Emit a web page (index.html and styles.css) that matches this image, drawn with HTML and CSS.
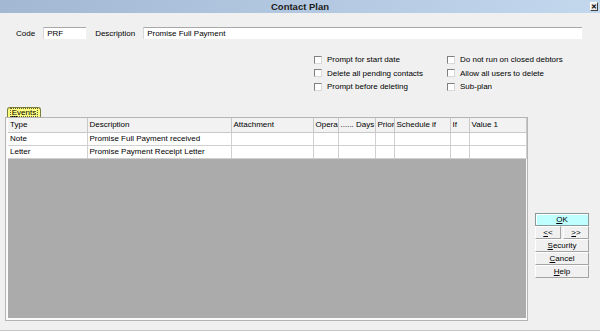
FILE: index.html
```html
<!DOCTYPE html>
<html lang="en">
<head>
  <meta charset="UTF-8">
  <title>Contact Plan</title>
  <link rel="stylesheet" href="styles.css">
</head>
<body>
  <div class="window">
    <div class="titlebar">
      <span></span>
      <span class="title">Contact Plan</span>
      <span class="close-wrap"><span class="close">&#x2715;</span></span>
    </div>

    <div class="fields">
      <label class="field-label">Code</label>
      <div class="input code-input">PRF</div>
      <label class="field-label desc-label">Description</label>
      <div class="input desc-input">Promise Full Payment</div>
    </div>

    <div class="options">
      <div class="option"><span class="check"></span>Prompt for start date</div>
      <div class="option"><span class="check"></span>Do not run on closed debtors</div>
      <div class="option"><span class="check"></span>Delete all pending contacts</div>
      <div class="option"><span class="check"></span>Allow all users to delete</div>
      <div class="option"><span class="check"></span>Prompt before deleting</div>
      <div class="option"><span class="check"></span>Sub-plan</div>
    </div>

    <div class="main">
      <div class="events">
        <div class="tab"><span class="tab-focus"><u>E</u>vents</span></div>
        <div class="frame">
          <div class="grid">
            <table>
              <colgroup>
                <col style="width:79px">
                <col style="width:144px">
                <col style="width:82px">
                <col style="width:25px">
                <col style="width:37px">
                <col style="width:19px">
                <col style="width:56px">
                <col style="width:19px">
                <col style="width:57px">
              </colgroup>
              <thead>
                <tr>
                  <th>Type</th>
                  <th>Description</th>
                  <th>Attachment</th>
                  <th>Opera</th>
                  <th>...... Days</th>
                  <th>Prior</th>
                  <th>Schedule if</th>
                  <th>If</th>
                  <th>Value 1</th>
                </tr>
              </thead>
              <tbody>
                <tr>
                  <td>Note</td>
                  <td>Promise Full Payment received</td>
                  <td></td><td></td><td></td><td></td><td></td><td></td><td></td>
                </tr>
                <tr>
                  <td>Letter</td>
                  <td>Promise Payment Receipt Letter</td>
                  <td></td><td></td><td></td><td></td><td></td><td></td><td></td>
                </tr>
              </tbody>
            </table>
          </div>
        </div>
      </div>

      <div class="buttons">
        <div class="btn btn-ok"><u>O</u>K</div>
        <div class="nav">
          <div class="btn btn-small"><u>&lt;</u>&lt;</div>
          <div class="btn btn-small"><u>&gt;</u>&gt;</div>
        </div>
        <div class="btn"><u>S</u>ecurity</div>
        <div class="btn"><u>C</u>ancel</div>
        <div class="btn"><u>H</u>elp</div>
      </div>
    </div>
  </div>
</body>
</html>
```

FILE: styles.css
```css
body {
  margin: 0;
  padding: 0;
  background-color: #f0f0f0;
  font-family: "Liberation Sans", Arial, sans-serif;
  font-size: 8px;
  color: #000;
}
.window {
  width: 600px;
  height: 331px;
  box-sizing: border-box;
  border-bottom: 1px solid #c4c4c4;
  overflow: hidden;
}
.titlebar {
  height: 13px;
  display: grid;
  grid-template-columns: 1fr auto 1fr;
  align-items: center;
  background: linear-gradient(to right, #a2b8d3, #c3d7ed);
}
.title {
  font-size: 9.5px;
  font-weight: bold;
  color: #1c1c1c;
}
.close-wrap {
  display: flex;
  justify-content: flex-end;
  padding-right: 2px;
}
.close {
  width: 8px;
  height: 9px;
  box-sizing: border-box;
  font-size: 7px;
  font-weight: bold;
  line-height: 8px;
  text-align: center;
  background: #e8e8e8;
  border: 1px solid;
  border-color: #fff #404040 #404040 #fff;
}
.fields {
  display: flex;
  align-items: center;
  padding: 14px 0 0 16px;
}
.field-label {
  margin-right: 8px;
}
.desc-label {
  margin-left: 9px;
}
.input {
  height: 12px;
  box-sizing: border-box;
  background: #fff;
  border-top: 1px solid #a8a8a8;
  border-left: 1px solid #d8d8d8;
  padding-left: 3px;
  line-height: 11px;
}
.code-input {
  width: 43px;
}
.desc-input {
  width: 439px;
}
.options {
  display: grid;
  grid-template-columns: 133px auto;
  grid-auto-rows: 13.5px;
  margin: 14px 0 0 314px;
}
.option {
  display: flex;
  align-items: center;
}
.check {
  width: 8px;
  height: 8px;
  box-sizing: border-box;
  background: #fff;
  border: 1px solid;
  border-color: #808080 #d8d8d8 #d8d8d8 #808080;
  margin-right: 5px;
}
.main {
  display: flex;
  margin-top: 13px;
  padding-left: 5px;
}
.tab {
  margin-left: 2px;
  width: 34px;
  height: 10px;
  box-sizing: border-box;
  background: #ffff80;
  border: 1px solid #7c7c40;
  border-bottom: none;
  border-radius: 3px 3px 0 0;
  display: flex;
  justify-content: center;
  align-items: center;
}
.tab-focus {
  outline: 1px dotted #606030;
  line-height: 7px;
  padding: 0 1px;
}
.frame {
  width: 523px;
  height: 204px;
  box-sizing: border-box;
  border: 1px solid #b4b4b4;
  padding: 0 1px 2px 2px;
  background: #fafafa;
}
.grid {
  width: 518px;
  height: 200px;
  background: #ababab;
}
table {
  width: 518px;
  table-layout: fixed;
  border-collapse: collapse;
}
th, td {
  padding: 0 0 0 2px;
  text-align: left;
  font-weight: normal;
  white-space: nowrap;
  overflow: hidden;
}
th {
  height: 14px;
  background: #f2f2f2;
  border-right: 1px solid #c8c8c8;
  border-bottom: 1px solid #c8c8c8;
}
td {
  height: 12px;
  background: #fff;
  border-right: 1px solid #d0d0d0;
  border-bottom: 1px solid #d0d0d0;
}
.buttons {
  margin-left: 7px;
  padding-top: 106px;
  width: 54px;
}
.btn {
  height: 13px;
  box-sizing: border-box;
  border: 1px solid;
  border-color: #fff #a4a4a4 #a4a4a4 #fff;
  background: #f0f0f0;
  text-align: center;
  line-height: 11px;
}
.btn-ok {
  background: #c0ffff;
  border-color: #8a9a9a;
  box-shadow: inset 1px 1px 0 #fff;
}
.nav {
  display: flex;
  justify-content: space-between;
}
.btn-small {
  width: 26px;
}
```
